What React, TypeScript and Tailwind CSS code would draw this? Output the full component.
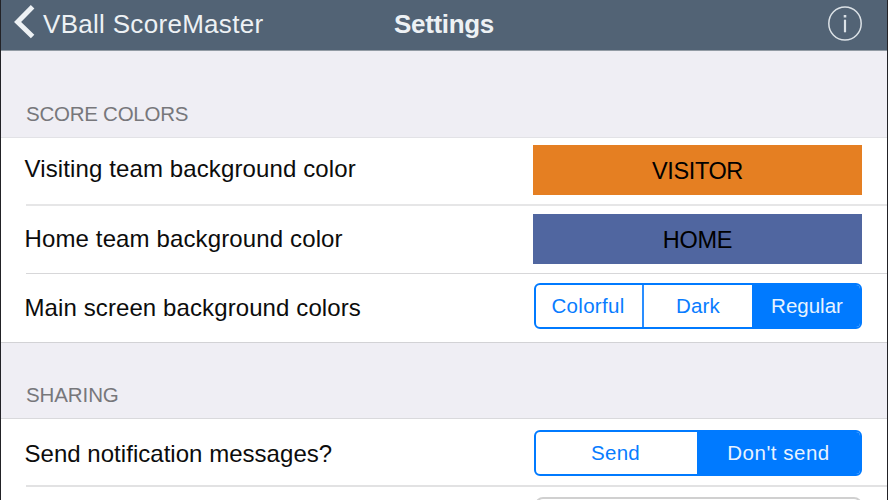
import type { ReactNode } from 'react';

function SectionTitle({ children, className }: { children: ReactNode; className: string }) {
  return (
    <h2 className={`flex items-end border-b pl-[25px] text-[20.5px] leading-6 text-[#77777b] ${className}`}>
      {children}
    </h2>
  );
}

function Row({ label, labelClass, className, children }: { label: string; labelClass: string; className: string; children: ReactNode }) {
  return (
    <div className={`ml-[25px] flex items-start justify-between pr-[25px] ${className}`}>
      <span className={`-ml-[1.5px] text-2xl leading-7 whitespace-nowrap ${labelClass}`}>{label}</span>
      {children}
    </div>
  );
}

export default function App() {
  return (
    <div className="flex h-[500px] w-[888px] flex-col overflow-hidden border-x border-[#222226] bg-[#efeef4] font-['Liberation_Sans',Arial,sans-serif] text-[#0c0c0c]">
      <header className="grid h-[51px] shrink-0 grid-cols-3 items-start border-b border-[#929ba4] bg-[#526375] text-[#edf1f4]">
        <button className="flex items-start pl-3 text-left">
          <svg className="mt-[5px] h-[34px] w-[23px]" viewBox="0 0 23 34" fill="none" stroke="currentColor" strokeWidth="5">
            <path d="M19.6 1.8 L4.6 17 L19.6 31.5" />
          </svg>
          <span className="mt-2.5 ml-[7px] text-[26px] leading-7 tracking-[0.3px] whitespace-nowrap">VBall ScoreMaster</span>
        </button>
        <h1 className="mt-2.5 text-center text-[26px] leading-7 font-bold tracking-[-0.35px]">Settings</h1>
        <button className="mt-[6px] mr-[25px] justify-self-end" aria-label="Info">
          <svg className="h-[35px] w-[34px]" viewBox="0 0 34 35" fill="none" stroke="#dce2e7" strokeWidth="1.5">
            <ellipse cx="17" cy="17.5" rx="16.2" ry="16.6" />
            <path d="M17 13.7 V26.3" strokeWidth="2.2" />
            <path d="M17 9 V11.5" strokeWidth="2.6" />
          </svg>
        </button>
      </header>

      <SectionTitle className="h-[87px] border-[#e2e2e6] pb-[11px] tracking-[-0.25px]">SCORE COLORS</SectionTitle>
      <div className="h-[205px] shrink-0 border-b border-[#d2d2d5] bg-white">
        <Row label="Visiting team background color" labelClass="mt-[17px] tracking-[0.12px]" className="h-[68px] border-b-2 border-[#e6e6e7]">
          <div className="mt-[7px] flex h-[50px] w-[329px] items-center justify-center bg-[#e57f22] pt-[3px] text-[23.5px] tracking-[-0.4px] text-black">VISITOR</div>
        </Row>
        <Row label="Home team background color" labelClass="mt-[19px] tracking-[0.13px]" className="h-[68px] border-b border-[#d7d7d9]">
          <div className="mt-2 flex h-[50px] w-[329px] items-center justify-center bg-[#5066a0] pt-[3px] text-[23.5px] tracking-[-0.2px] text-black">HOME</div>
        </Row>
        <Row label="Main screen background colors" labelClass="mt-5 tracking-[0.1px]" className="h-[68px]">
          <div className="mt-[9px] flex h-[46px] w-[328px] overflow-hidden rounded-md border-2 border-[#007aff] text-[20.5px] text-[#087cff]">
            <button className="w-[108px] border-r-2 border-[#2a8eff] pr-0.5 tracking-[0.3px]">Colorful</button>
            <button className="w-[108px] tracking-[0.2px]">Dark</button>
            <button className="flex-1 bg-[#007aff] pl-0.5 text-[#e8f3ff]">Regular</button>
          </div>
        </Row>
      </div>

      <SectionTitle className="h-[76px] border-[#d9d9dc] pb-[11px] tracking-[-0.1px]">SHARING</SectionTitle>
      <div className="h-[81px] shrink-0 bg-white">
        <Row label="Send notification messages?" labelClass="mt-[21px] tracking-[0.03px]" className="h-[68px] border-b-2 border-[#e2e2e3]">
          <div className="mt-[11px] flex h-[46px] w-[328px] overflow-hidden rounded-md border-2 border-[#007aff] text-[20.5px] text-[#087cff]">
            <button className="w-[161px] pr-0.5 tracking-[0.3px]">Send</button>
            <button className="flex-1 bg-[#007aff] tracking-[0.5px] text-[#e8f3ff]">Don't send</button>
          </div>
        </Row>
        <div className="mt-2.5 mr-[25px] ml-auto h-[46px] w-[327px] rounded-lg border-2 border-[#d0d0d0]" />
      </div>
    </div>
  );
}
